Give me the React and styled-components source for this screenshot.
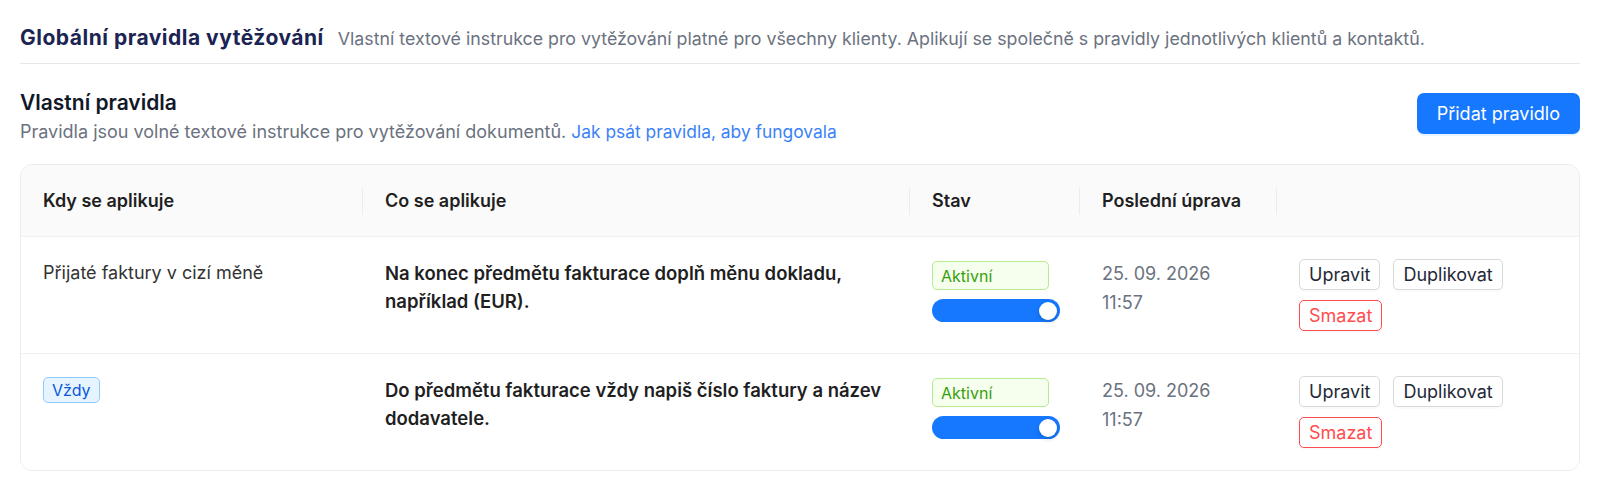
import React from "react";
import styled, { createGlobalStyle } from "styled-components";

const GlobalStyle = createGlobalStyle`
  body {
    margin: 0;
    background: #ffffff;
    font-family: Inter, "Noto Sans", sans-serif;
    color: #1f2937;
  }
`;

const Page = styled.div`
  padding: 0 20px 20px 20px;
`;

const TitleBar = styled.div`
  display: flex;
  align-items: baseline;
  gap: 14px;
  padding: 26px 0 13px;
  border-bottom: 1px solid #e5e7eb;
`;

const PageTitle = styled.h1`
  margin: 0;
  font-size: 21px;
  line-height: 24px;
  font-weight: 700;
  color: #1b2452;
  letter-spacing: 0.5px;
`;

const PageDesc = styled.span`
  font-size: 17.8px;
  color: #6b7280;
`;

const SectionHead = styled.div`
  display: flex;
  justify-content: space-between;
  align-items: flex-start;
  padding-top: 26px;
  margin-bottom: 20px;
`;

const SectionTitle = styled.h2`
  margin: 0;
  font-size: 21px;
  line-height: 26px;
  font-weight: 600;
  color: #111827;
`;

const SectionDesc = styled.p`
  margin: 4px 0 0;
  font-size: 18px;
  line-height: 24px;
  color: #6b7280;
`;

const HelpLink = styled.a`
  color: #3b82f6;
  text-decoration: none;
  font-size: 17.4px;
`;

const PrimaryButton = styled.button`
  margin-top: 3px;
  height: 41px;
  padding: 0 20px;
  border: none;
  border-radius: 7px;
  background: #1677ff;
  color: #fff;
  font-family: inherit;
  font-size: 18px;
  box-shadow: 0 2px 0 rgba(5, 145, 255, 0.1);
`;

const Card = styled.div`
  border: 1px solid #ebebeb;
  border-radius: 12px;
  overflow: hidden;
`;

const Row = styled.div`
  display: grid;
  grid-template-columns: 342px 547px 170px 197px 1fr;
  border-bottom: ${(p) => (p.last ? "none" : "1px solid #f0f0f0")};
  background: ${(p) => (p.head ? "#fafafa" : "#fff")};
`;

const HeadCell = styled.div`
  position: relative;
  height: 71px;
  display: flex;
  align-items: center;
  padding: 0 22px;
  font-size: 18px;
  font-weight: 600;
  color: #1f1f1f;

  &::after {
    content: "";
    display: ${(p) => (p.noDivider ? "none" : "block")};
    position: absolute;
    right: 0;
    top: 50%;
    width: 1px;
    height: 27px;
    transform: translateY(-50%);
    background: #ececec;
  }
`;

const Cell = styled.div`
  padding: 22px;
  font-size: 18px;
  line-height: 28px;
`;

const Condition = styled.div`
  color: #333;
`;

const Instruction = styled.div`
  font-size: 18.5px;
  font-weight: 600;
  color: #1f1f1f;
`;

const DateText = styled.div`
  color: #6b7280;
  line-height: 29px;
`;

const Tag = styled.span`
  display: inline-flex;
  align-items: center;
  box-sizing: border-box;
  height: ${(p) => p.h}px;
  width: ${(p) => (p.w ? `${p.w}px` : "auto")};
  padding: 0 8px;
  margin-top: ${(p) => p.mt || 0}px;
  border-radius: 5px;
  font-size: 16px;
  line-height: 1;
  border: 1px solid ${(p) => p.border};
  background: ${(p) => p.bg};
  color: ${(p) => p.fg};
`;

const StatusStack = styled.div`
  display: flex;
  flex-direction: column;
  align-items: flex-start;
  gap: 9px;
  padding-top: 2px;
`;

const Switch = styled.div`
  position: relative;
  width: 128px;
  height: 23px;
  border-radius: 12px;
  background: #1677ff;

  &::after {
    content: "";
    position: absolute;
    right: 3px;
    top: 2.5px;
    width: 18px;
    height: 18px;
    border-radius: 50%;
    background: #fff;
    box-shadow: 0 2px 4px rgba(0, 35, 11, 0.2);
  }
`;

const Actions = styled.div`
  display: flex;
  flex-wrap: wrap;
  gap: 10px 13px;
`;

const ActionButton = styled.button`
  height: 31px;
  padding: 0 9px;
  border-radius: 5px;
  background: #fff;
  font-family: inherit;
  font-size: 18px;
  border: 1px solid ${(p) => (p.danger ? "#ff4d4f" : "#d9d9d9")};
  color: ${(p) => (p.danger ? "#ff4d4f" : "#1f2937")};
  box-shadow: 0 2px 0 rgba(0, 0, 0, 0.02);
`;

const rules = [
  {
    id: 1,
    when: "Přijaté faktury v cizí měně",
    what: "Na konec předmětu fakturace doplň měnu dokladu, například (EUR).",
    date: "25. 09. 2026",
    time: "11:57",
  },
  {
    id: 2,
    always: true,
    what: "Do předmětu fakturace vždy napiš číslo faktury a název dodavatele.",
    date: "25. 09. 2026",
    time: "11:57",
  },
];

export default function App() {
  return (
    <>
      <GlobalStyle />
      <Page>
        <TitleBar>
          <PageTitle>Globální pravidla vytěžování</PageTitle>
          <PageDesc>
            Vlastní textové instrukce pro vytěžování platné pro všechny klienty. Aplikují se
            společně s pravidly jednotlivých klientů a kontaktů.
          </PageDesc>
        </TitleBar>

        <SectionHead>
          <div>
            <SectionTitle>Vlastní pravidla</SectionTitle>
            <SectionDesc>
              Pravidla jsou volné textové instrukce pro vytěžování dokumentů.{" "}
              <HelpLink href="#">Jak psát pravidla, aby fungovala</HelpLink>
            </SectionDesc>
          </div>
          <PrimaryButton>Přidat pravidlo</PrimaryButton>
        </SectionHead>

        <Card>
          <Row head>
            <HeadCell>Kdy se aplikuje</HeadCell>
            <HeadCell>Co se aplikuje</HeadCell>
            <HeadCell>Stav</HeadCell>
            <HeadCell>Poslední úprava</HeadCell>
            <HeadCell noDivider />
          </Row>
          {rules.map((r, i) => (
            <Row key={r.id} last={i === rules.length - 1}>
              <Cell>
                {r.always ? (
                  <Tag h={26} mt={1} bg="#e6f4ff" border="#91caff" fg="#0958d9">
                    Vždy
                  </Tag>
                ) : (
                  <Condition>{r.when}</Condition>
                )}
              </Cell>
              <Cell>
                <Instruction>{r.what}</Instruction>
              </Cell>
              <Cell>
                <StatusStack>
                  <Tag h={29} w={117} bg="#f6ffed" border="#b7eb8f" fg="#389e0d">
                    Aktivní
                  </Tag>
                  <Switch />
                </StatusStack>
              </Cell>
              <Cell>
                <DateText>{r.date}</DateText>
                <DateText>{r.time}</DateText>
              </Cell>
              <Cell>
                <Actions>
                  <ActionButton>Upravit</ActionButton>
                  <ActionButton>Duplikovat</ActionButton>
                  <ActionButton danger>Smazat</ActionButton>
                </Actions>
              </Cell>
            </Row>
          ))}
        </Card>
      </Page>
    </>
  );
}
